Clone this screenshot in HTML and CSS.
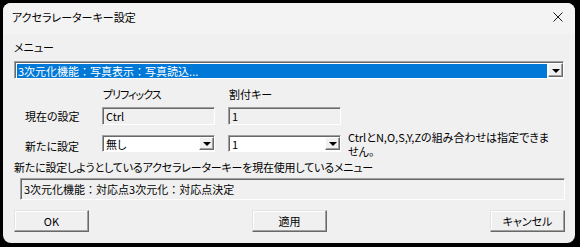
FILE: index.html
```html
<!DOCTYPE html>
<html lang="ja">
<head>
    <meta charset="UTF-8">
    <title>アクセラレーターキー設定</title>
    <link rel="stylesheet" href="styles.css">
</head>
<body>
    <div class="dialog">
        <div class="titlebar">
            <span class="title">アクセラレーターキー設定</span>
            <svg class="close" width="10" height="10" viewBox="0 0 10 10">
                <path d="M0.5 0.5 L9.5 9.5 M9.5 0.5 L0.5 9.5" stroke="#1a1a1a" stroke-width="1"/>
            </svg>
        </div>
        <div class="content">
            <div class="label menu-label">メニュー</div>
            <div class="combo main-combo">
                <div class="combo-text selected">3次元化機能：写真表示：写真読込...</div>
                <div class="drop-btn"><span class="arrow"></span></div>
            </div>

            <div class="settings">
                <div></div>
                <div class="label head prefix-head">プリフィックス</div>
                <div class="label head">割付キー</div>
                <div></div>

                <div class="label row-label current-label">現在の設定</div>
                <div class="field disabled">Ctrl</div>
                <div class="field disabled">1</div>
                <div></div>

                <div class="label row-label">新たに設定</div>
                <div class="combo small-combo">
                    <div class="combo-text">無し</div>
                    <div class="drop-btn"><span class="arrow"></span></div>
                </div>
                <div class="combo small-combo">
                    <div class="combo-text">1</div>
                    <div class="drop-btn"><span class="arrow"></span></div>
                </div>
                <div class="note">CtrlとN,O,S,Y,Zの組み合わせは指定できません。</div>
            </div>

            <div class="label used-label">新たに設定しようとしているアクセラレーターキーを現在使用しているメニュー</div>
            <div class="field used-box">3次元化機能：対応点3次元化：対応点決定</div>

            <div class="buttons">
                <button class="btn">OK</button>
                <button class="btn">適用</button>
                <button class="btn">キャンセル</button>
            </div>
        </div>
    </div>
</body>
</html>
```

FILE: styles.css
```css
body {
    margin: 0;
    background: #000;
    font-family: "Noto Sans CJK JP", "Noto Sans", sans-serif;
    font-size: 11px;
    font-feature-settings: "palt";
    color: #000;
}
.dialog {
    margin: 3px;
    width: 572px;
    height: 240px;
    background: #f0f0f0;
    border-radius: 8px;
    overflow: hidden;
}
.titlebar {
    height: 31px;
    background: #f3f3f3;
    display: flex;
    align-items: center;
    justify-content: space-between;
    padding: 0 12px 3px 9px;
    box-sizing: border-box;
}
.close {
    display: block;
}
.content {
    padding-left: 11px;
}
.label {
    line-height: 14px;
    height: 14px;
    white-space: nowrap;
}
.menu-label {
    margin-top: 6px;
}
.combo {
    display: flex;
    box-sizing: border-box;
    border: 1px solid;
    border-color: #a0a0a0 #fff #fff #a0a0a0;
    box-shadow: inset 1px 1px #696969;
    background: #fff;
    padding: 1px 0 0 1px;
}
.main-combo {
    margin-top: 7px;
    width: 550px;
    height: 18px;
}
.combo-text {
    flex: 1;
    line-height: 14px;
    padding-left: 2px;
    white-space: nowrap;
}
.selected {
    background: #0078d7;
    color: #fff;
    margin: 1px 1px 0 1px;
    height: 14px;
    line-height: 14px;
    padding-left: 1px;
    font-feature-settings: normal;
}
.drop-btn {
    width: 15px;
    height: 14px;
    box-sizing: border-box;
    background: #f0f0f0;
    border: 1px solid;
    border-color: #fff #696969 #696969 #fff;
    box-shadow: inset -1px -1px #a0a0a0;
    display: flex;
    align-items: center;
    justify-content: center;
}
.arrow {
    width: 0;
    height: 0;
    border-left: 4px solid transparent;
    border-right: 4px solid transparent;
    border-top: 4px solid #000;
    margin-top: 1px;
}
.settings {
    display: grid;
    grid-template-columns: 75px 113px 113px 1fr;
    grid-template-rows: 14px 24px 28px;
    column-gap: 13px;
    margin-top: 8px;
}
.head {
    padding-left: 1px;
}
.prefix-head {
    letter-spacing: -1px;
}
.row-label {
    padding-left: 11px;
    align-self: end;
}
.current-label {
    margin-bottom: 2px;
}
.field {
    box-sizing: border-box;
    border: 1px solid;
    border-color: #a0a0a0 #fff #fff #a0a0a0;
    box-shadow: inset 1px 1px #696969;
    padding: 1px 0 0 3px;
    line-height: 14px;
    white-space: nowrap;
}
.disabled {
    background: #f0f0f0;
    height: 18px;
    align-self: end;
}
.small-combo {
    height: 17px;
    align-self: end;
    margin-bottom: 1px;
}
.small-combo .drop-btn {
    height: 13px;
}
.note {
    margin-left: -6px;
    margin-top: 5px;
    width: 205px;
    line-height: 14px;
    align-self: start;
}
.used-label {
    margin-top: 7px;
    letter-spacing: -0.2px;
}
.used-box {
    margin: 4px 0 0 6px;
    width: 545px;
    height: 22px;
    background: #f0f0f0;
    padding-top: 3px;
    font-feature-settings: normal;
}
.buttons {
    display: flex;
    justify-content: space-between;
    width: 551px;
    margin-top: 10px;
}
.btn {
    width: 75px;
    height: 22px;
    font-family: inherit;
    font-size: 11px;
    font-feature-settings: "palt";
    background: #f0f0f0;
    border: 1px solid;
    border-color: #e3e3e3 #696969 #696969 #e3e3e3;
    box-shadow: inset -1px -1px #a0a0a0, inset 1px 1px #fff;
    padding: 0;
}
```
